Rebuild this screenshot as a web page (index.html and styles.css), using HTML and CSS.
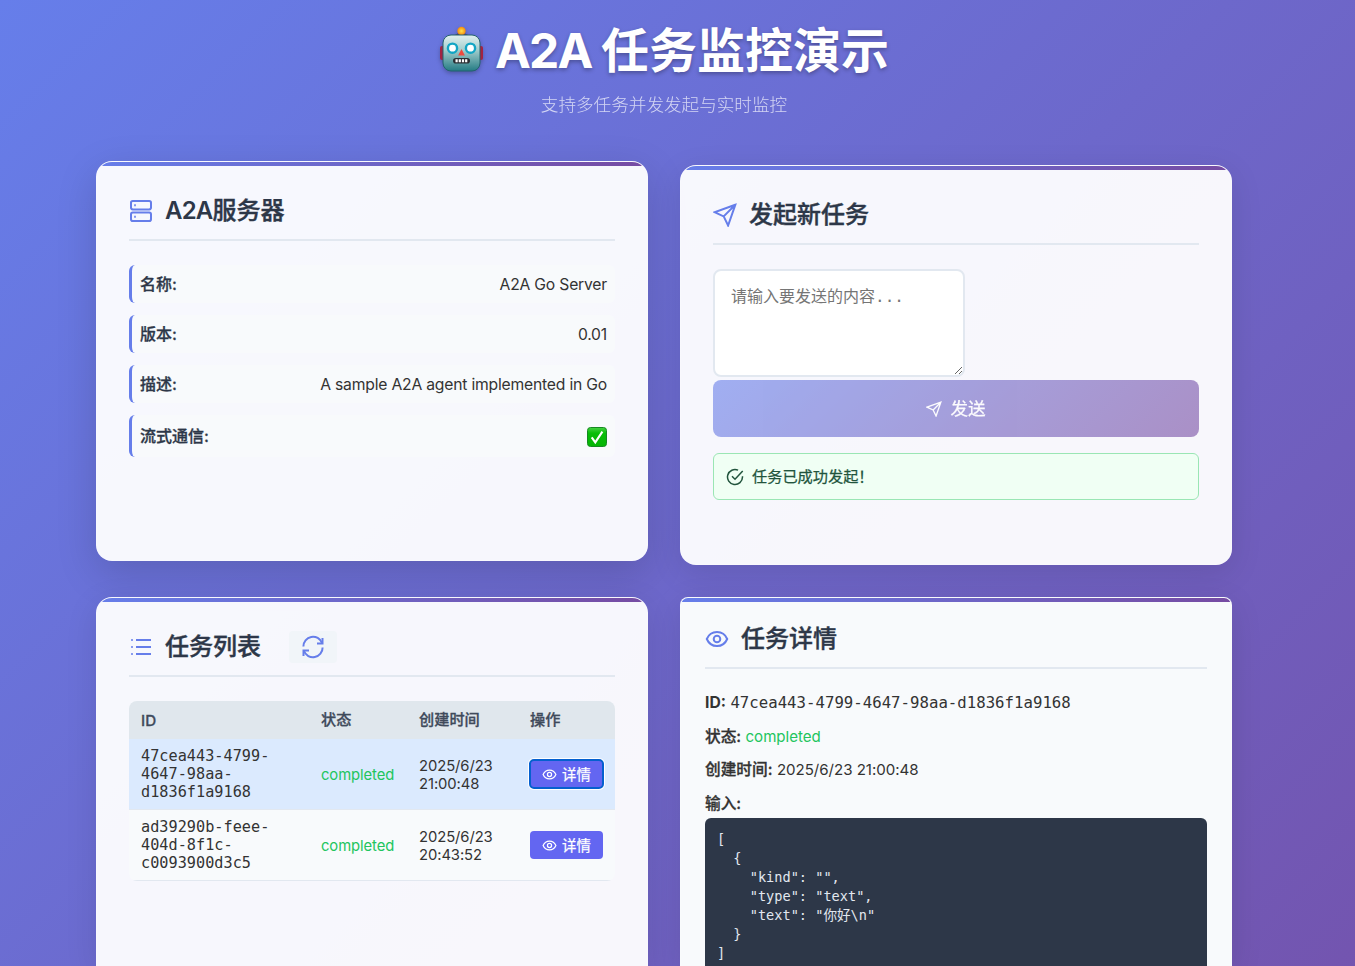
FILE: index.html
```html
<!DOCTYPE html>
<html lang="zh-CN">
<head>
<meta charset="utf-8">
<title>A2A 任务监控演示</title>
<link rel="stylesheet" href="styles.css">
</head>
<body>
<svg width="0" height="0" class="defs" aria-hidden="true">
  <defs>
    <symbol id="send" viewBox="0 0 24 24"><path d="M22.3 1.8 1.5 9.2l9.2 4.2 4.4 9.1zM22.3 1.8 10.7 13.4"/></symbol>
    <symbol id="eye" viewBox="0 0 24 24"><path d="M1.8 12C3.8 7.3 7.5 5 12 5S20.2 7.3 22.2 12C20.2 16.7 16.5 19 12 19S3.8 16.7 1.8 12z"/><circle cx="12" cy="12" r="3.3"/></symbol>
    <linearGradient id="metal" x1="0" y1="0" x2="0" y2="1"><stop offset="0" stop-color="#e2f0ef"/><stop offset=".4" stop-color="#a5cfcf"/><stop offset="1" stop-color="#247b83"/></linearGradient>
    <linearGradient id="green" x1="0" y1="0" x2="0" y2="1"><stop offset="0" stop-color="#46d142"/><stop offset=".3" stop-color="#08bd08"/><stop offset="1" stop-color="#05b505"/></linearGradient>
    <radialGradient id="bulb"><stop offset="0" stop-color="#ffe34a"/><stop offset="1" stop-color="#f58a0b"/></radialGradient>
  </defs>
</svg>
<main class="container">
  <header class="header">
    <h1>
      <svg class="robot" viewBox="0 0 44 48">
        <path d="M15 9q6-5 13 0v3H15z" fill="#51436f"/>
        <circle cx="21.5" cy="5" r="4.2" fill="url(#bulb)"/>
        <rect x="0" y="20" width="5" height="14" rx="2" fill="#a22342"/>
        <rect x="38" y="20" width="5" height="14" rx="2" fill="#a22342"/>
        <rect x="3" y="9" width="37" height="36" rx="8" fill="url(#metal)" stroke="#23626e" stroke-width="1"/>
        <circle cx="12.5" cy="22.2" r="4.6" fill="#fff" stroke="#12a5c4" stroke-width="2.4"/>
        <circle cx="30.5" cy="22.2" r="4.6" fill="#fff" stroke="#12a5c4" stroke-width="2.4"/>
        <path d="m21.5 23 3.4 6.6h-6.8z" fill="#ef493d"/>
        <rect x="13" y="32" width="17" height="5.6" rx="2.8" fill="#2a2e33"/>
        <path d="M15.5 34.8h12" stroke="#fff" stroke-width="3" stroke-dasharray="2.2 1"/>
      </svg>
      <span><span class="latin">A2A </span>任务监控演示</span>
    </h1>
    <p>支持多任务并发发起与实时监控</p>
  </header>
  <div class="grid">
    <section class="card raised">
      <h2>
        <svg class="icon" viewBox="0 0 24 24"><rect x="2" y="2" width="20" height="8.4" rx="1.8"/><rect x="2" y="13.6" width="20" height="8.4" rx="1.8"/><path d="M5.2 6.2h1.6M5.2 17.8h1.6"/></svg>
        <span><span class="latin">A2A</span>服务器</span>
      </h2>
      <dl class="info">
        <div><dt>名称:</dt><dd>A2A Go Server</dd></div>
        <div><dt>版本:</dt><dd>0.01</dd></div>
        <div><dt>描述:</dt><dd>A sample A2A agent implemented in Go</dd></div>
        <div class="tall"><dt>流式通信:</dt><dd><svg class="check" viewBox="0 0 20 20"><rect x=".5" y=".5" width="19" height="19" rx="3" fill="url(#green)" stroke="#168a22"/><path d="m4.7 10.3 3.6 5L15.4 4.6" fill="none" stroke="#fff" stroke-width="2.1"/></svg></dd></div>
      </dl>
    </section>
    <section class="card">
      <h2>
        <svg class="icon"><use href="#send"/></svg>
        <span>发起新任务</span>
      </h2>
      <form>
        <textarea placeholder="请输入要发送的内容..."></textarea>
        <button class="submit" type="button"><svg class="icon"><use href="#send"/></svg><span>发送</span></button>
      </form>
      <div class="alert">
        <svg class="icon" viewBox="0 0 24 24"><path d="M22 11v1a10 10 0 1 1-5.9-9.1"/><path d="m8 11 4 4L22.3 4"/></svg>
        <span>任务已成功发起！</span>
      </div>
    </section>
    <section class="card">
      <h2>
        <svg class="icon" viewBox="0 0 24 24"><path d="M7 5h15M7 12h15M7 19h15"/><path d="M2 5h2M2 12h2M2 19h2" opacity=".75"/></svg>
        <span>任务列表</span>
        <button class="refresh" type="button"><svg class="icon" viewBox="0 0 24 24"><path d="M21.5 3v5.5H16M2.5 21v-5.5H8"/><path d="M21 8A9.6 9.6 0 0 0 2.4 11.5M3 16A9.6 9.6 0 0 0 21.6 12.5"/></svg></button>
      </h2>
      <table>
        <colgroup><col class="c-id"><col class="c-state"><col class="c-time"><col></colgroup>
        <thead><tr><th class="latin-head">ID</th><th>状态</th><th>创建时间</th><th>操作</th></tr></thead>
        <tbody>
          <tr class="selected">
            <td class="mono">47cea443-4799-<br>4647-98aa-<br>d1836f1a9168</td>
            <td class="text ok">completed</td>
            <td class="text">2025/6/23<br>21:00:48</td>
            <td><button class="detail-btn focused" type="button"><svg class="icon"><use href="#eye"/></svg><span>详情</span></button></td>
          </tr>
          <tr>
            <td class="mono">ad39290b-feee-<br>404d-8f1c-<br>c0093900d3c5</td>
            <td class="text ok">completed</td>
            <td class="text">2025/6/23<br>20:43:52</td>
            <td><button class="detail-btn" type="button"><svg class="icon"><use href="#eye"/></svg><span>详情</span></button></td>
          </tr>
        </tbody>
      </table>
    </section>
    <section class="card detail">
      <h2>
        <svg class="icon"><use href="#eye"/></svg>
        <span>任务详情</span>
      </h2>
      <div class="fields">
        <div><b class="id">ID:</b> <span class="mono">47cea443-4799-4647-98aa-d1836f1a9168</span></div>
        <div><b>状态:</b> <span class="value ok">completed</span></div>
        <div><b>创建时间:</b> <span class="value">2025/6/23 21:00:48</span></div>
        <div><b>输入:</b></div>
      </div>
      <pre>[
  {
    "kind": "",
    "type": "text",
    "text": "你好\n"
  }
]</pre>
    </section>
  </div>
</main>
</body>
</html>
```
FILE: styles.css
```css
* { box-sizing: border-box; margin: 0; padding: 0; }

html { height: 100%; overflow: hidden; }

body {
  height: 966px;
  overflow: hidden;
  padding-right: 27px;
  font-family: Inter, "Noto Sans CJK SC", sans-serif;
  font-size: 16px;
  color: #333;
  background: linear-gradient(135deg, #667eea 0%, #764ba2 100%) 0 0 / 100% 1500px no-repeat;
}

.defs { position: absolute; }

.container { width: 1200px; margin: 0 auto; padding: 0 32px; }

.header { height: 165px; padding-top: 16px; text-align: center; color: #fff; }

.header h1 {
  display: flex;
  justify-content: center;
  align-items: center;
  gap: 11px;
  height: 70px;
  padding-left: 1px;
  font-size: 48px;
  font-weight: 700;
  line-height: 70px;
  white-space: nowrap;
  text-shadow: 0 2px 4px rgba(0, 0, 0, .3);
}

.header .latin { letter-spacing: -1.8px; }

.robot { width: 44px; height: 48px; margin-top: -3px; filter: drop-shadow(0 2px 2px rgba(0, 0, 0, .25)); }

.header p {
  margin-top: 6px;
  font-size: 17.6px;
  font-weight: 300;
  line-height: 26px;
  opacity: .7;
}

.grid {
  display: grid;
  grid-template-columns: 552px 552px;
  grid-template-rows: 400px 369px;
  gap: 32px;
}

.card {
  position: relative;
  overflow: hidden;
  padding: 32px;
  border: 1px solid rgba(255, 255, 255, .2);
  border-radius: 16px;
  background: rgba(255, 255, 255, .95);
  box-shadow: 0 8px 32px rgba(0, 0, 0, .1);
}

.card:nth-child(n+3) { border-bottom: 0; border-bottom-left-radius: 0; border-bottom-right-radius: 0; }

.card::before {
  content: "";
  position: absolute;
  top: 0;
  left: 0;
  right: 0;
  height: 4px;
  background: linear-gradient(90deg, #667eea, #764ba2);
}

.raised { transform: translateY(-4px); box-shadow: 0 12px 40px rgba(0, 0, 0, .15); }

.icon {
  width: 24px;
  height: 24px;
  flex: none;
  fill: none;
  stroke: currentColor;
  stroke-width: 2;
}

h2 {
  display: flex;
  align-items: center;
  gap: 12px;
  height: 47px;
  padding-bottom: 12px;
  margin-bottom: 24px;
  border-bottom: 2px solid #e2e8f0;
  color: #2d3748;
  font-size: 24px;
  font-weight: 500;
  line-height: 33px;
  -webkit-text-stroke: .4px currentColor;
}

h2 .latin { font-weight: 600; letter-spacing: -.8px; -webkit-text-stroke: 0; }
h2 .icon { color: #667eea; }

.info { display: grid; gap: 12px; }

.info div {
  display: flex;
  justify-content: space-between;
  align-items: center;
  height: 38px;
  padding: 0 8px;
  border-left: 3px solid #667eea;
  border-radius: 6px;
  background: #f8fafc;
}

.info .tall { height: 42px; }
.info dt { padding-bottom: 2px; color: #2d3748; font-weight: 500; }
.info dt, th, .fields b { -webkit-text-stroke: .3px currentColor; }
.info dd { display: flex; font-size: 15.7px; letter-spacing: -.2px; }
.check { width: 20px; height: 20px; margin: 2px 0 0; }

form { display: flex; flex-direction: column; align-items: flex-start; gap: 3px; }

textarea {
  width: 252px;
  height: 108px;
  padding: 12px 16px;
  border: 2px solid #e2e8f0;
  border-radius: 8px;
  background: #fff;
  font-family: "DejaVu Sans Mono", "Noto Sans CJK SC", monospace;
  font-size: 16px;
  resize: both;
}

textarea::placeholder { color: #757575; }

button { border: 0; font-family: inherit; color: #fff; }

.submit {
  display: flex;
  justify-content: center;
  align-items: center;
  gap: 8px;
  width: 100%;
  height: 57px;
  border-radius: 8px;
  background: linear-gradient(135deg, #667eea, #764ba2);
  font-size: 17.6px;
  font-weight: 400;
  opacity: .6;
}

.submit span, .detail-btn span { padding-bottom: 2px; -webkit-text-stroke: .25px currentColor; }
.submit .icon { width: 16px; height: 16px; }

.alert {
  display: flex;
  align-items: center;
  gap: 8px;
  height: 47px;
  margin-top: 16px;
  padding: 0 12px;
  border: 1px solid #9ae6b4;
  border-radius: 6px;
  background: #f0fff4;
  color: #22543d;
  font-size: 15.2px;
  font-weight: 400;
}

.alert span { padding-bottom: 3px; -webkit-text-stroke: .25px currentColor; }
.alert .icon { width: 18px; height: 18px; }

.refresh {
  display: flex;
  justify-content: center;
  align-items: center;
  width: 48px;
  height: 32px;
  margin-left: 16px;
  border-radius: 4px;
  background: #f1f5f9;
}

table {
  width: 486px;
  table-layout: fixed;
  border-collapse: separate;
  border-spacing: 0;
  border-radius: 8px;
  overflow: hidden;
  background: #f8fafc;
  font-size: 15.2px;
  line-height: 18px;
}

.c-id { width: 180px; }
.c-state { width: 98px; }
.c-time { width: 111px; }

th {
  height: 38px;
  padding: 0 12px;
  background: #e0e7ed;
  color: #3f4a5b;
  font-size: 15.2px;
  font-weight: 500;
  text-align: left;
}

.latin-head { padding-top: 2px; }

td { height: 71px; padding: 0 12px; border-bottom: 1px solid #e2e8f0; white-space: nowrap; }
td.text { padding-top: 2px; font-size: 14.8px; letter-spacing: -.08px; }

.selected td { background: #dbeafe; }
.mono { font-family: "DejaVu Sans Mono", monospace; letter-spacing: .02px; }
.ok { color: #22c55e; }

.detail-btn {
  display: flex;
  justify-content: center;
  align-items: center;
  gap: 5px;
  width: 73px;
  height: 28px;
  border-radius: 4px;
  background: #6366f1;
  font-size: 14.4px;
  font-weight: 400;
}

.detail-btn .icon { width: 15px; height: 15px; }
.focused { outline: 2px solid #0560cf; outline-offset: -1px; box-shadow: 0 0 0 2px #fff; }

.detail { padding: 24px; border-radius: 8px; background: #f8fafc; }

.fields { font-size: 15.68px; line-height: 33.6px; margin-top: -7px; }
.fields div { height: 33.6px; white-space: nowrap; }
.fields b { font-weight: 500; }
.fields .id { font-weight: 700; -webkit-text-stroke: 0; }
.fields .value { font-size: 15.1px; letter-spacing: -.03px; }

pre {
  height: 148px;
  margin-top: -2px;
  padding: 12px;
  border-radius: 6px 6px 0 0;
  background: #2d3748;
  color: #e2e8f0;
  font-family: "DejaVu Sans Mono", "Noto Sans CJK SC", monospace;
  font-size: 13.6px;
  line-height: 19px;
}
```
